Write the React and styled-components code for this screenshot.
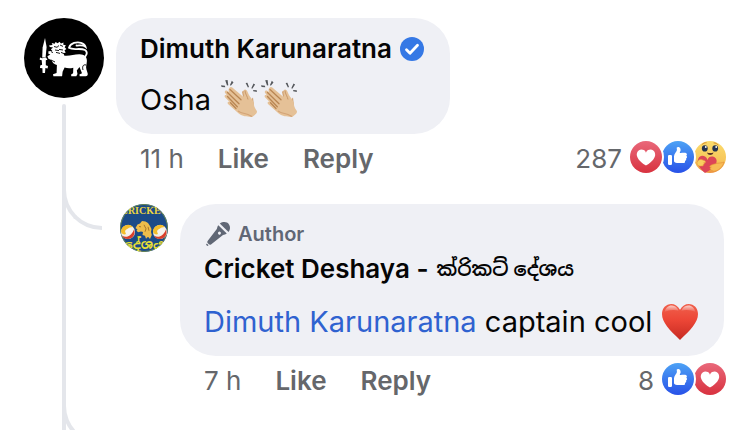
import styled, { createGlobalStyle } from "styled-components";

const GlobalStyle = createGlobalStyle`
  * {
    box-sizing: border-box;
  }
  body {
    margin: 0;
    background: #fff;
    color: #050505;
    font-family: Inter, "Noto Sans Sinhala", "Noto Sans", sans-serif;
  }
`;

function LionAvatar() {
  return (
    <svg viewBox="0 0 80 80" role="img" aria-label="Dimuth Karunaratna">
      <circle cx="40" cy="40" r="40" fill="#000" />
      <g fill="#fff">
        <path d="M21 20l1.600 9-1 10.500h-3.400l.4-10z" />
        <path d="M16 39.500l2 .8 4-.8 1.500 2.200-1.700.6v5l2.200.7-.4 2.600-2.200-.5-.4 4.800h-2.400l-.2-4.600-2.400-.4.2-2.500 1.900-.7-.4-4.400-2-.6z" />
        <path d="M25 27.500l3.500-.6-.8-1.900 3 .8.8-1.800 2.300 1.300 1.600-1.500 1.600 1.600 2.500-1-.2 2.400 2.600.4-1.200 2 1.600 1.700-1.800 1.500 1.200 2-2 .8.400 2.300c5 .8 10-1.300 15.500-1.200 4.800.1 7.500 2.700 7.300 6.600-.1 3.400-1.300 5.400-.5 8.400l1.300 4.300c.3 1.700-.6 2.700-2 2.700h-6l-.3-1.700 2.600-1.400-2.500-6.300-2.700 3.700.7 3.500-1.200 2.200h-5l-.2-1.700 2-1.300.2-5.500c-3.600.8-6 .6-8.700-.2l-2 4.200-.5 4.500h-8.700l-.4-2 3.600-1.400.3-8c-3-.7-4.500-2.600-5.500-5l-3-1.200-1-2.500 3-1.600-2-.8v-2.600l4-.2-1.500-1.800 2.200-1.600-3.200-.6z" />
      </g>
      <path
        d="M59 40c4-2 5-6 2-8-5-2.500-12 .7-16-2.200 1.500-5 8-6.200 12-5 2.700.8 4 2.200 4.500 4-3-2.400-6-1-9-1.300"
        fill="none"
        stroke="#fff"
        strokeWidth="1.800"
        strokeLinecap="round"
      />
      <path
        d="M30 28.500l3 .8 2-1.800m-4 4.500l4 .6m1-5.600l3 1.400m-4 3l4 .6m-7 2.400l4 1m1-1l3 1.200m-13-2l2 1M27 42l4 2m31 3c-3-1-4 2-3 5"
        fill="none"
        stroke="#000"
        strokeWidth="0.900"
      />
    </svg>
  );
}

function Ball({ x }) {
  return (
    <g transform={`translate(${x} 28)`}>
      <circle r="7" fill="#f3efe6" />
      <path d="M-7 0a7 7 0 0 1 12-5C0-5-3-2-2 2-4 3-6 2-7 0z" fill="#f2bd2c" />
      <path d="M-6 3.500C-2 6 3 5 6-2.500 8 3 4 7 0 7-3 7-5 6-6 3.500z" fill="#d9402b" />
      <path d="M-3-1C-1-4 3-4 5-1 3 2 0 3-2 2z" fill="#f6f3ee" />
    </g>
  );
}

function PageAvatar() {
  return (
    <svg viewBox="0 0 48 48" role="img" aria-label="Cricket Deshaya">
      <defs>
        <clipPath id="page-round">
          <circle cx="24" cy="24" r="24" />
        </clipPath>
      </defs>
      <g clipPath="url(#page-round)">
        <rect width="48" height="48" fill="#1b4b88" />
        <circle cx="24" cy="24" r="23.500" fill="none" stroke="#6e8a4c" />
        <text x="24" y="10" textAnchor="middle" fontFamily="Liberation Serif, serif" fontWeight="700" fontSize="10" fill="#ecd53f">
          CRICKET
        </text>
        <Ball x="8" />
        <Ball x="40" />
        <path
          d="M15.500 24l2-3.500 2.500-1 2-2.500 3.500.6 2.500 1.400 2 3 1.500 3-.5 3 .8 3-1.800 4-2-2.200-2 2-1-3-2.500-.8.5-3-2-.5-3 .8-1.500-1.800 1-1z"
          fill="#eebd4b"
        />
        <path d="M19 22.500l2 .3m3-2l2 4-1 3m3-5l1 4" stroke="#a9772b" fill="none" />
        <text x="24" y="45" textAnchor="middle" fontFamily="Noto Sans Sinhala, Noto Sans, sans-serif" fontWeight="700" fontSize="13" fill="#e8df35">
          දේශය
        </text>
      </g>
    </svg>
  );
}

function VerifiedIcon() {
  return (
    <svg width="24" height="24" viewBox="0 0 24 24" role="img" aria-label="Verified">
      <circle cx="12" cy="12" r="12" fill="#3578e5" />
      <path d="M6.500 12.800l3.500 3.400 7.500-7.900" fill="none" stroke="#fff" strokeWidth="2.800" strokeLinecap="round" strokeLinejoin="round" />
    </svg>
  );
}

function MicIcon() {
  return (
    <svg width="24" height="24" viewBox="0 0 24 24" aria-hidden="true" fill="#606775">
      <path d="M13.800 1.600C17.300-.8 21.200-.2 23 2.400c1.500 2.400 1.300 5.300-.5 7.500z" />
      <path
        d="M12.300 3.200l8.500 8.200c-1 .9-2.500 1-3.800 1.600L5 22.400c-.8.600-1.500.5-2.100-.1l-1.300-1.400c-.5-.6-.5-1.200 0-1.900L10.800 7c.5-1.300.6-2.700 1.500-3.800zm-.1 8.800a1.500 1.500 0 1 0 2.200-2 1.500 1.500 0 0 0-2.200 2z"
        fillRule="evenodd"
      />
      <path d="M.8 21.500l1.800 1.800-1.200.7L0 22.700z" />
    </svg>
  );
}

function ClapEmoji() {
  return (
    <svg width="36" height="38" viewBox="0 0 36 38" role="img" aria-label="clapping hands">
      <g fill="#55585c">
        <path d="M0 5.200l4 .5.200 1.600L.6 7zM4.200.2L6.600 0l.7 5.200-1.300.2zM10.800.8l1.700 1.600-2.700 3.300-.8-.8zM24.600 3l1.800-.2L28 7l-1.100.5zM32.500 3.600l1.600 1-2.800 4.200-1-.6zM32.200 10l3.600.2v1.700l-3.600-.7z" />
      </g>
      <path d="M21 12c1-1.700 3-1.400 3.600.4l4.600 8.200 2.800-3 1 8-8 5z" fill="#d2a577" />
      <path
        d="M8.300 8c.9-1.200 2.300-1.100 3.300-.2l10 8.500c1.300.7 1.700-.2 1.400-1.500-.8-2.500-.9-5 1.200-5.200 2 .2 2.400 2.600 3.500 4.800 1 2.200 4.200 5 5 8.600.3 2.300.5 4.500 3 7.700.6 1.200.2 2.200-.6 3.100l-3.500 3c-1.100.5-2.200.1-3.300-.1-4-.3-8.300-.8-12-4.500L7 24c-1-1.200.1-2.900 1.700-1.900l-4.500-4.500c-1.500-1.600.1-3.300 1.700-2.200L4.200 13c-1.200-1.400.3-3.300 2.100-2.200l2.200 1.700C7.200 11.200 7.300 9.300 8.300 8z"
        fill="#e5c197"
      />
      <path d="M9 9.500l11 10.300M6.500 12.500L18 23.800M6.500 16.500l9.800 10.200M9.500 22.800l5.500 5.700" stroke="#b98653" strokeWidth="1.300" fill="none" strokeLinecap="round" />
      <path d="M24 10.500c.2 3.500 2.500 6 3 9" stroke="#c9996a" strokeWidth="1" fill="none" />
      <path d="M17 31c4 3 8 2 11 4l3 1.500" stroke="#d3a477" strokeWidth="1.200" fill="none" />
    </svg>
  );
}

function HeartEmoji() {
  return (
    <svg width="36" height="36" viewBox="0 0 36 36" role="img" aria-label="red heart">
      <defs>
        <linearGradient id="heart-fill" x1="0" y1="0" x2="0" y2="1">
          <stop offset="0" stopColor="#f0604c" />
          <stop offset="0.450" stopColor="#ec4636" />
          <stop offset="1" stopColor="#c62a22" />
        </linearGradient>
        <linearGradient id="heart-shine" x1="0" y1="0" x2="0" y2="1">
          <stop offset="0" stopColor="#fff" stopOpacity="0.700" />
          <stop offset="1" stopColor="#fff" stopOpacity="0" />
        </linearGradient>
      </defs>
      <path
        d="M18 5.700C15.800 1.800 12.700 0 9.300 0 4 0 0 4.300 0 10c0 8.600 7.600 16 18 26 10.400-10 18-17.400 18-26C36 4.300 32 0 26.700 0 23.300 0 20.200 1.800 18 5.700z"
        fill="url(#heart-fill)"
      />
      <path d="M2.500 8.200C3.500 3.700 6.500 1.300 10 1.500c3 .2 5.700 2.400 6.600 5.200-3.600-1.200-9.500-1.300-14.100 1.500zM33.500 8.200c-1-4.500-4-6.900-7.500-6.700-3 .2-5.700 2.400-6.600 5.200 3.600-1.200 9.500-1.300 14.100 1.500z" fill="url(#heart-shine)" />
    </svg>
  );
}

function LikeReaction() {
  return (
    <svg viewBox="0 0 16 16" role="img" aria-label="Like">
      <defs>
        <linearGradient id="like-fill" x1="0" y1="0" x2="0" y2="1">
          <stop offset="0" stopColor="#4da2f5" />
          <stop offset="1" stopColor="#2851e8" />
        </linearGradient>
      </defs>
      <circle cx="8" cy="8" r="8" fill="url(#like-fill)" />
      <path
        d="M12.162 7.338c.176.123.338.245.338.674 0 .43-.229.604-.474.725.1.163.132.36.089.546-.077.344-.392.611-.672.69.121.194.159.385.015.62-.185.295-.346.407-1.058.407H7.500c-.988 0-1.500-.546-1.500-1V7.665c0-1.230 1.467-2.275 1.467-3.130L7.361 3.470c-.005-.065.008-.224.058-.270.080-.079.301-.200.635-.200.218 0 .363.041.534.123.581.277.732.978.732 1.542 0 .271-.414 1.083-.470 1.364 0 0 .867-.192 1.879-.199 1.061-.006 1.749.190 1.749.842 0 .261-.219.523-.316.666zM3.600 7h.8a.6.6 0 0 1 .6.6v3.800a.6.6 0 0 1-.6.6h-.8a.6.6 0 0 1-.6-.6V7.600a.6.6 0 0 1 .6-.6z"
        fill="#fff"
      />
    </svg>
  );
}

function LoveReaction() {
  return (
    <svg viewBox="0 0 16 16" role="img" aria-label="Love">
      <defs>
        <linearGradient id="love-fill" x1="0" y1="0" x2="0" y2="1">
          <stop offset="0" stopColor="#e9687a" />
          <stop offset="1" stopColor="#d8323f" />
        </linearGradient>
      </defs>
      <circle cx="8" cy="8" r="8" fill="url(#love-fill)" />
      <path
        d="M10.300 4.300C8.250 4.300 8 6 8 6S7.750 4.300 5.700 4.300c-1.900 0-2.500 2-2.250 3.100C4.080 10.200 8 12.300 8 12.300s3.920-2.100 4.550-4.900c.25-1.100-.35-3.100-2.250-3.100"
        fill="#fff"
      />
    </svg>
  );
}

function CareReaction() {
  return (
    <svg viewBox="0 0 32 32" role="img" aria-label="Care">
      <defs>
        <linearGradient id="care-fill" x1="0" y1="0" x2="0" y2="1">
          <stop offset="0" stopColor="#fbdc6d" />
          <stop offset="0.600" stopColor="#f7c65a" />
          <stop offset="1" stopColor="#ee9440" />
        </linearGradient>
      </defs>
      <circle cx="16" cy="16" r="16" fill="url(#care-fill)" />
      <path d="M8 3.600c1.200-1.400 2.600-2 4.200-1.900M20 1.900c1.700 0 3 .7 4 2" stroke="#d58b2e" strokeWidth="1" fill="none" strokeLinecap="round" />
      <ellipse cx="10.800" cy="7.400" rx="2.900" ry="3.100" fill="#26344f" />
      <ellipse cx="21.200" cy="7.400" rx="2.900" ry="3.100" fill="#26344f" />
      <circle cx="11.800" cy="6" r="0.900" fill="#fff" />
      <circle cx="22.200" cy="6" r="0.900" fill="#fff" />
      <path d="M13 11.500c2 .8 4.500.8 6.500 0-.6 1.800-1.800 2.500-3.200 2.500s-2.700-.7-3.300-2.500z" fill="#5b3528" />
      <path
        d="M13.500 19c.7-3 3.300-4 5.500-3.400 3 .9 4.400 3.600 3.300 6.400-1.400 3.500-5 6.500-11.300 10-4.500-4-7.700-8-7.300-12 .3-3 2-5.300 4.500-5.200 2.200.1 4.500 1.200 5.300 4.200z"
        fill="#dd4557"
      />
      <path d="M3 21.500c1-2.700 3-3.500 5-2.800 1.500.6 3 .8 3.500 2 .2 1-.8 1.300-1.800 1.100 1 .9.600 1.900-.6 1.700.6 1-.1 1.700-1.300 1.400C6 25.500 3 25 3 21.500z" fill="#f9cf60" stroke="#e59a3c" strokeWidth="0.600" />
      <path d="M30 21c-2 1-4 1-6.500 1.300-2.500.4-6.400 1.500-7.600 2.700-.6.800.3 1.500 1.400 1.100-1.600.6-1.900 2-.3 2.100-.7.900 0 1.600 1 1.400C21 31.500 28 28.500 30 21z" fill="#f7bc55" stroke="#e38d38" strokeWidth="0.600" />
    </svg>
  );
}

const reactionIcons = {
  like: LikeReaction,
  love: LoveReaction,
  care: CareReaction,
};

function CommentActions({ time, count, reactions }) {
  return (
    <Actions>
      <Time>{time}</Time>
      <ActionButton type="button">Like</ActionButton>
      <ActionButton type="button">Reply</ActionButton>
      <ReactionSummary>
        {count}
        <ReactionStack>
          {reactions.map((name, index) => {
            const Icon = reactionIcons[name];
            return (
              <Reaction key={name} $order={reactions.length - index}>
                <Icon />
              </Reaction>
            );
          })}
        </ReactionStack>
      </ReactionSummary>
    </Actions>
  );
}

function App() {
  return (
    <>
      <GlobalStyle />
      <Thread>
        <Rail>
          <Avatar $size={80}>
            <LionAvatar />
          </Avatar>
          <RailLine />
        </Rail>
        <Content>
          <Bubble>
            <Name>
              Dimuth Karunaratna
              <VerifiedIcon />
            </Name>
            <Message>
              Osha
              <Emojis>
                <ClapEmoji />
                <ClapEmoji />
              </Emojis>
            </Message>
          </Bubble>
          <CommentActions time="11 h" count={287} reactions={["love", "like", "care"]} />
          <Replies>
            <ReplyRow>
              <Branch />
              <Avatar $size={48}>
                <PageAvatar />
              </Avatar>
              <Content>
                <Bubble>
                  <AuthorTag>
                    <MicIcon />
                    Author
                  </AuthorTag>
                  <Name $tall>
                    Cricket Deshaya -<SinhalaName lang="si">ක්රිකට් දේශය</SinhalaName>
                  </Name>
                  <Message>
                    <span>
                      <Mention href="#dimuth">Dimuth Karunaratna</Mention> captain cool
                    </span>
                    <HeartEmoji />
                  </Message>
                </Bubble>
                <CommentActions time="7 h" count={8} reactions={["like", "love"]} />
              </Content>
            </ReplyRow>
            <NextReply>
              <Branch />
            </NextReply>
          </Replies>
        </Content>
      </Thread>
    </>
  );
}

const Thread = styled.main`
  display: flex;
  gap: 12px;
  min-height: 100vh;
  padding: 18px 24px 0;
`;

const Rail = styled.div`
  display: flex;
  flex-direction: column;
  align-items: center;
  gap: 6px;
  flex: none;
`;

const RailLine = styled.div`
  flex: 1;
  width: 4px;
  border-radius: 2px 2px 0 0;
  background: #e4e6eb;
`;

const Avatar = styled.div`
  flex: none;
  width: ${(p) => p.$size}px;
  height: ${(p) => p.$size}px;
  svg {
    display: block;
  }
`;

const Content = styled.div`
  flex: 1;
  min-width: 0;
`;

const Bubble = styled.div`
  width: fit-content;
  padding: 16px 26px 16px 24px;
  border-radius: 36px;
  background: #eff0f5;
`;

const Name = styled.h3`
  display: flex;
  align-items: center;
  gap: 8px;
  margin: 0 0 18px;
  font-size: 26px;
  font-weight: 600;
  line-height: ${(p) => (p.$tall ? 34 : 30)}px;
  white-space: nowrap;
`;

const SinhalaName = styled.span`
  font-size: 20px;
`;

const Message = styled.div`
  display: flex;
  align-items: center;
  gap: 10px;
  font-size: 29px;
  line-height: 36px;
  white-space: nowrap;
  svg {
    flex: none;
  }
`;

const Emojis = styled.span`
  display: flex;
  align-items: flex-end;
  gap: 4px;
  height: 36px;
`;

const Mention = styled.a`
  color: #2f62d0;
  text-decoration: none;
`;

const AuthorTag = styled.div`
  display: flex;
  align-items: center;
  gap: 8px;
  margin-bottom: 4px;
  padding-left: 2px;
  color: #606775;
  font-size: 20px;
  font-weight: 600;
  line-height: 28px;
`;

const Actions = styled.div`
  display: flex;
  align-items: flex-start;
  gap: 34px;
  margin-top: 7px;
  padding-left: 24px;
  color: #65676b;
  font-size: 26px;
  line-height: 36px;
`;

const Time = styled.span`
  white-space: nowrap;
`;

const ActionButton = styled.button`
  padding: 0;
  border: 0;
  background: none;
  color: inherit;
  font: inherit;
  font-weight: 600;
  cursor: pointer;
`;

const ReactionSummary = styled.div`
  display: flex;
  gap: 8px;
  margin-left: auto;
`;

const ReactionStack = styled.span`
  display: flex;
`;

const Reaction = styled.span`
  display: block;
  position: relative;
  z-index: ${(p) => p.$order};
  width: 32px;
  height: 32px;
  border-radius: 50%;
  box-shadow: 0 0 0 2px #fff;
  svg {
    display: block;
  }
`;

const Replies = styled.div`
  margin-top: 27px;
  margin-left: -54px;
`;

const ReplyRow = styled.article`
  display: flex;
  gap: 12px;
`;

/* starts above its row so the curve leaves the rail early */
const Branch = styled.div`
  flex: none;
  width: 40px;
  height: 50px;
  margin-top: -24px;
  margin-right: 6px;
  border: solid #e4e6eb;
  border-width: 0 0 4px 4px;
  border-bottom-left-radius: 40px;
`;

const NextReply = styled.div`
  height: 31px;
  overflow: hidden;
  padding-top: 21px;
`;

export default App;
